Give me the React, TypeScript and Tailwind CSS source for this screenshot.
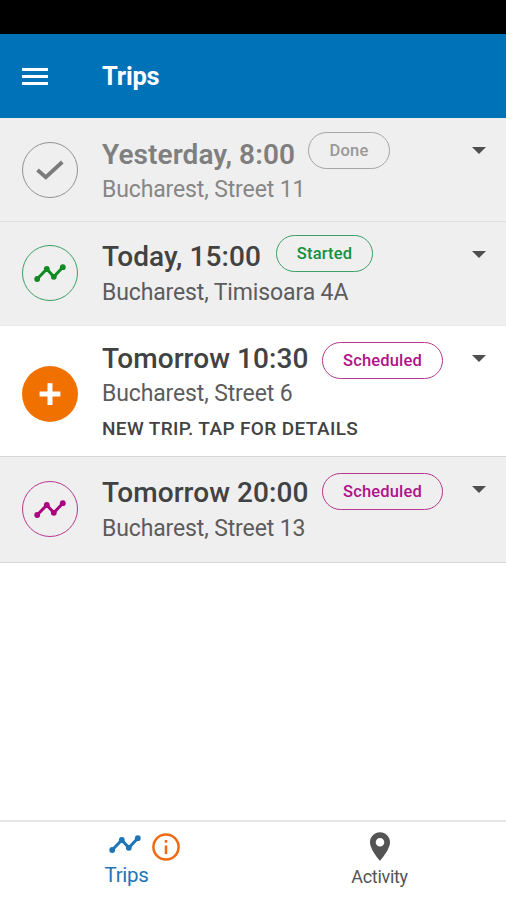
import clsx from "clsx";

type IconKind = "check" | "route" | "plus";

interface Trip {
  time: string;
  address: string;
  status: string;
  note?: string;
  icon: IconKind;
  rowClass: string;
  circleClass: string;
  titleClass: string;
  addressClass: string;
  pillClass: string;
  caretClass: string;
}

const trips: Trip[] = [
  {
    time: "Yesterday, 8:00",
    address: "Bucharest, Street 11",
    status: "Done",
    icon: "check",
    rowClass: "h-[104px] pt-[14px] bg-[#efefef] border-[#dfdfdf]",
    circleClass: "mt-[10px] border-[1.5px] border-[#929292] text-[#7b7b7b]",
    titleClass: "w-[206px] pt-[6px] tracking-[0.08px] text-[#7f7f7f] font-semibold",
    addressClass: "pt-[2px] text-[#868686]",
    pillClass: "w-[82px] border-[#a5a5a5] text-[#999999]",
    caretClass: "mt-[15px]",
  },
  {
    time: "Today, 15:00",
    address: "Bucharest, Timisoara 4A",
    status: "Started",
    icon: "route",
    rowClass: "h-[104px] pt-[13px] bg-[#efefef] border-[#e9e9e9]",
    circleClass: "mt-[10px] border-[1.5px] border-[#3b9f63] text-[#128a23]",
    titleClass: "w-[174px] pt-[5px] tracking-[0.08px] text-[#424242] font-medium",
    addressClass: "pt-[2px] text-[#5c5c5c]",
    pillClass: "w-[97px] border-[#3b9f63] text-[#12903f]",
    caretClass: "mt-[16px]",
  },
  {
    time: "Tomorrow 10:30",
    address: "Bucharest, Street 6",
    status: "Scheduled",
    note: "NEW TRIP. TAP FOR DETAILS",
    icon: "plus",
    rowClass: "h-[131px] pt-[16px] bg-white border-[#d6d6d6]",
    circleClass: "mt-[24px] bg-[#f17100] text-white",
    titleClass: "w-[220px] tracking-[0.08px] text-[#424242] font-medium",
    addressClass: "-mt-[4px] text-[#5c5c5c]",
    pillClass: "w-[121px] border-[#b4388f] text-[#b0128a]",
    caretClass: "mt-[13px]",
  },
  {
    time: "Tomorrow 20:00",
    address: "Bucharest, Street 13",
    status: "Scheduled",
    icon: "route",
    rowClass: "h-[106px] pt-[16px] bg-[#efefef] border-[#d6d6d6]",
    circleClass: "mt-[8px] border-[1.5px] border-[#b4388f] text-[#a9077f]",
    titleClass: "w-[220px] pt-[3px] tracking-[0.08px] text-[#424242] font-medium",
    addressClass: "text-[#5c5c5c]",
    pillClass: "w-[121px] border-[#b4388f] text-[#b0128a]",
    caretClass: "mt-[13px]",
  },
];

function RouteIcon({ className }: { className?: string }) {
  return (
    <svg viewBox="0 0 32 20" className={className} fill="none" stroke="currentColor">
      <path d="M3.2 16 L12.8 6 L19.8 13.8 L28.8 4.2" strokeWidth="3" strokeLinejoin="round" />
      <g fill="currentColor" stroke="none">
        <circle cx="3.2" cy="16" r="2.9" />
        <circle cx="12.8" cy="6" r="2.9" />
        <circle cx="19.8" cy="13.8" r="2.9" />
        <circle cx="28.8" cy="4.2" r="2.9" />
      </g>
    </svg>
  );
}

function TripIcon({ kind }: { kind: IconKind }) {
  if (kind === "check") {
    return (
      <svg viewBox="0 0 28 20" className="w-7 h-5" fill="none" stroke="currentColor" strokeWidth="3.8">
        <path d="M1.5 10 L9.8 17.2 L26.3 2" />
      </svg>
    );
  }
  if (kind === "plus") {
    return (
      <svg viewBox="0 0 22 22" className="w-[22px] h-[22px]" fill="none" stroke="currentColor" strokeWidth="5">
        <path d="M11 0.3 V22 M0.6 11 H21.4" />
      </svg>
    );
  }
  return <RouteIcon className="w-8 h-5" />;
}

function TripRow({ trip }: { trip: Trip }) {
  return (
    <li className={clsx("flex items-start pl-[21.5px] border-b", trip.rowClass)}>
      <div className={clsx("flex items-center justify-center shrink-0 w-14 h-14 rounded-full", trip.circleClass)}>
        <TripIcon kind={trip.icon} />
      </div>
      <div className="flex-1 pl-[24.5px] whitespace-nowrap">
        <div className="flex items-start h-[39px]">
          <h2 className={clsx("text-[28px] leading-[33px]", trip.titleClass)}>{trip.time}</h2>
          <span
            className={clsx(
              "flex items-center justify-center h-[37px] pt-[2px] rounded-full border-[1.5px] text-[16.5px] font-medium tracking-[0.15px]",
              trip.pillClass
            )}
          >
            {trip.status}
          </span>
        </div>
        <p className={clsx("text-[23px] leading-[34px] tracking-[-0.13px]", trip.addressClass)}>{trip.address}</p>
        {trip.note && (
          <p className="pt-[2px] text-[19px] leading-[32px] tracking-[0.38px] font-medium text-[#424242]">
            {trip.note}
          </p>
        )}
      </div>
      <svg viewBox="0 0 14 7" className={clsx("w-[14px] h-[7px] mr-5", trip.caretClass)} fill="#4f4f4f">
        <path d="M0 0 H14 L7 7 Z" />
      </svg>
    </li>
  );
}

export default function App() {
  return (
    <div className="flex flex-col w-[506px] h-[900px] bg-white font-[Roboto,sans-serif] overflow-hidden">
      <div className="h-[34px] bg-black" />
      <header className="flex items-center h-[84px] pl-[21.5px] bg-[#0072b7] text-white">
        <div className="flex flex-col gap-[4px] w-[26px]">
          <span className="h-[3px] bg-white" />
          <span className="h-[3px] bg-white" />
          <span className="h-[3px] bg-white" />
        </div>
        <h1 className="pl-[54.5px] text-[25.5px] tracking-[-0.2px] font-bold">Trips</h1>
      </header>

      <ul>
        {trips.map((trip) => (
          <TripRow key={trip.time} trip={trip} />
        ))}
      </ul>

      <nav className="flex mt-auto h-20 border-t-2 border-[#e5e5e5]">
        <a className="flex-1 flex flex-col items-center text-[#1b75b8]">
          <div className="flex items-center gap-[11px] h-[30px] mt-[10px] pl-[36px]">
            <RouteIcon className="w-8 h-5 -mt-[6px]" />
            <svg viewBox="0 0 28 28" className="w-7 h-7" fill="none" stroke="#ef6a13">
              <circle cx="14" cy="14" r="12.6" strokeWidth="2.5" />
              <path d="M14 12.5 V21 M14 7 V9.8" strokeWidth="2.5" />
            </svg>
          </div>
          <span className="text-[20.5px] leading-[26px] tracking-[-0.3px]">Trips</span>
        </a>
        <a className="flex-1 flex flex-col items-center text-[#545454]">
          <svg viewBox="5 2 14 20" className="w-5 h-[29px] mt-[10px]" fill="currentColor">
            <path d="M12 2C8.13 2 5 5.13 5 9c0 5.25 7 13 7 13s7-7.75 7-13c0-3.87-3.13-7-7-7zm0 10a3 3 0 0 1 0-6 3 3 0 0 1 0 6z" />
          </svg>
          <span className="pt-[2px] text-[18px] leading-[28px] tracking-[-0.3px]">Activity</span>
        </a>
      </nav>
    </div>
  );
}
